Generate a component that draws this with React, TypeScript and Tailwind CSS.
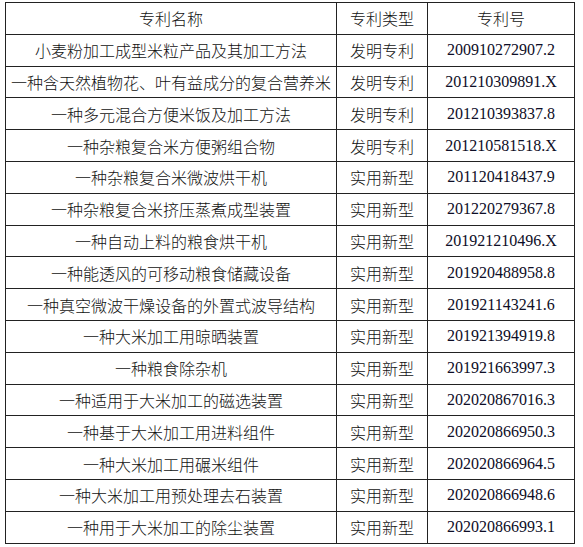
const rows: [string, string, string][] = [
  ['小麦粉加工成型米粒产品及其加工方法', '发明专利', '200910272907.2'],
  ['一种含天然植物花、叶有益成分的复合营养米', '发明专利', '201210309891.X'],
  ['一种多元混合方便米饭及加工方法', '发明专利', '201210393837.8'],
  ['一种杂粮复合米方便粥组合物', '发明专利', '201210581518.X'],
  ['一种杂粮复合米微波烘干机', '实用新型', '201120418437.9'],
  ['一种杂粮复合米挤压蒸煮成型装置', '实用新型', '201220279367.8'],
  ['一种自动上料的粮食烘干机', '实用新型', '201921210496.X'],
  ['一种能透风的可移动粮食储藏设备', '实用新型', '201920488958.8'],
  ['一种真空微波干燥设备的外置式波导结构', '实用新型', '201921143241.6'],
  ['一种大米加工用晾晒装置', '实用新型', '201921394919.8'],
  ['一种粮食除杂机', '实用新型', '201921663997.3'],
  ['一种适用于大米加工的磁选装置', '实用新型', '202020867016.3'],
  ['一种基于大米加工用进料组件', '实用新型', '202020866950.3'],
  ['一种大米加工用碾米组件', '实用新型', '202020866964.5'],
  ['一种大米加工用预处理去石装置', '实用新型', '202020866948.6'],
  ['一种用于大米加工的除尘装置', '实用新型', '202020866993.1'],
]

const cjk = "font-['Noto_Sans_CJK_SC',sans-serif] font-light"
const cell = 'border border-[#222] text-center p-0'

export default function App() {
  return (
    <div className="bg-white w-[583px] h-[547px] pt-[2px] pl-[5px]">
      <table className="border-collapse w-[569px] table-fixed text-[16px] text-[#111] leading-none">
        <colgroup>
          <col className="w-[331px]" />
          <col className="w-[91px]" />
          <col className="w-[147px]" />
        </colgroup>
        <thead>
          <tr className="h-[31.8px]">
            <th className={`${cell} ${cjk}`}>专利名称</th>
            <th className={`${cell} ${cjk}`}>专利类型</th>
            <th className={`${cell} ${cjk}`}>专利号</th>
          </tr>
        </thead>
        <tbody>
          {rows.map(([name, type, no]) => (
            <tr key={no} className="h-[31.8px]">
              <td className={`${cell} ${cjk} whitespace-nowrap`}>{name}</td>
              <td className={`${cell} ${cjk}`}>{type}</td>
              <td className={`${cell} font-normal font-['Liberation_Serif',serif] text-[#0d0d26]`}>{no}</td>
            </tr>
          ))}
        </tbody>
      </table>
    </div>
  )
}
